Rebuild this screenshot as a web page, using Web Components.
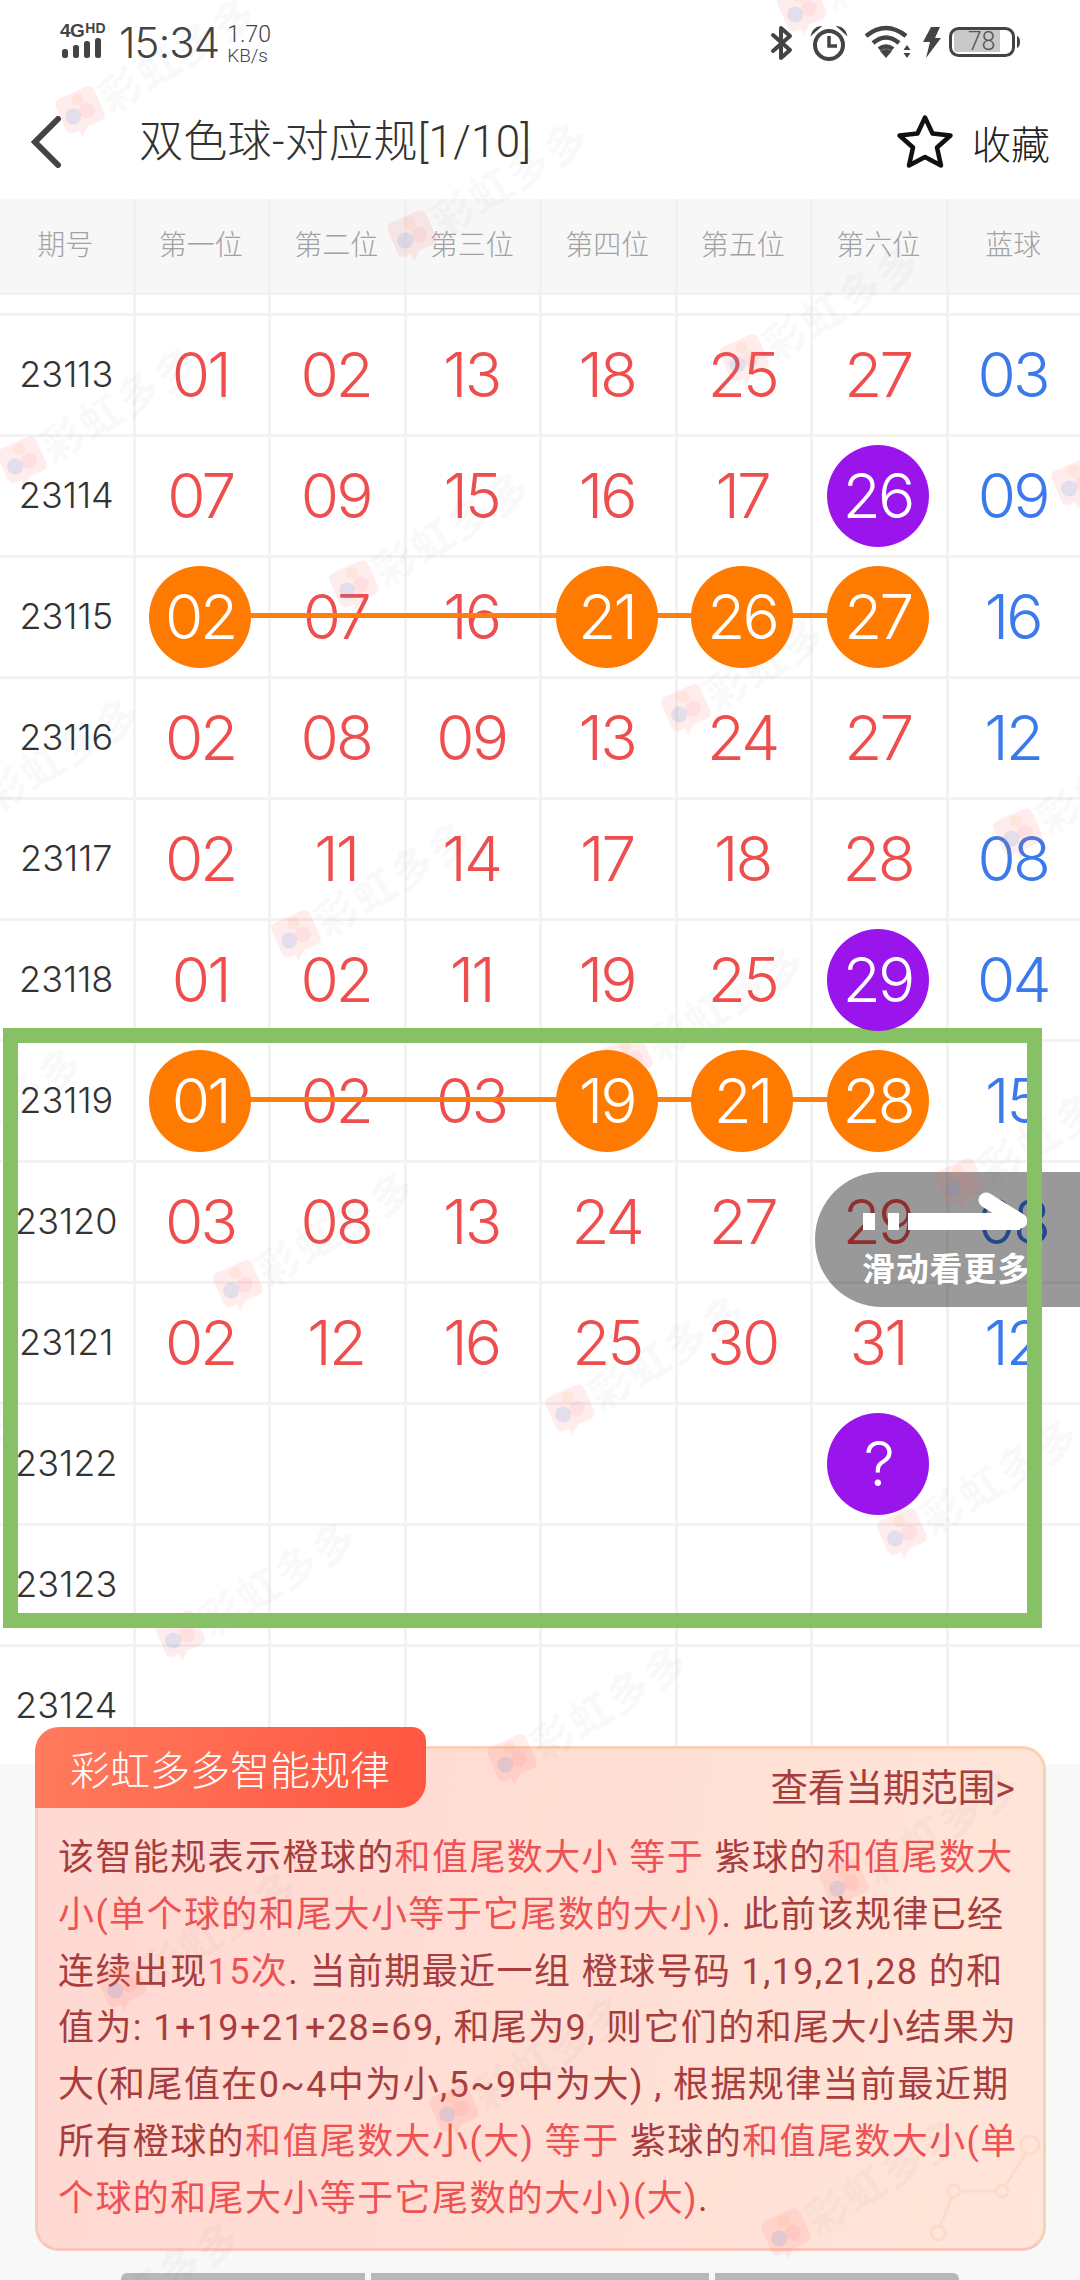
<!DOCTYPE html>
<html lang="zh">
<head>
<meta charset="utf-8">
<title>双色球-对应规</title>
<style>
    html, body { margin: 0; padding: 0; background: #fff; }
    body { font-family: "Noto Sans CJK SC", "Noto Sans", sans-serif; }
</style>
</head>
<body>

<lottery-screen>
    <status-bar slot="top"></status-bar>
    <title-bar slot="top" heading="双色球-对应规[1/10]"></title-bar>
    <draw-table slot="top">
        <draw-row issue="23113" nums="01,02,13,18,25,27,03"></draw-row>
        <draw-row issue="23114" nums="07,09,15,16,17,26,09" purple="5"></draw-row>
        <draw-row issue="23115" nums="02,07,16,21,26,27,16" orange="0,3,4,5"></draw-row>
        <draw-row issue="23116" nums="02,08,09,13,24,27,12"></draw-row>
        <draw-row issue="23117" nums="02,11,14,17,18,28,08"></draw-row>
        <draw-row issue="23118" nums="01,02,11,19,25,29,04" purple="5"></draw-row>
        <draw-row issue="23119" nums="01,02,03,19,21,28,15" orange="0,3,4,5"></draw-row>
        <draw-row issue="23120" nums="03,08,13,24,27,29,08"></draw-row>
        <draw-row issue="23121" nums="02,12,16,25,30,31,12"></draw-row>
        <draw-row issue="23122" nums=",,,,,?," purple="5"></draw-row>
        <draw-row issue="23123" nums=",,,,,,"></draw-row>
        <draw-row issue="23124" nums=",,,,,,"></draw-row>
    </draw-table>
    <rule-panel slot="bottom">
        <rule-card heading="彩虹多多智能规律" link="查看当期范围&gt;">该智能规表示橙球的<hi-text>和值尾数大小 等于 </hi-text>紫球的<hi-text>和值尾数大</hi-text><br><hi-text>小(单个球的和尾大小等于它尾数的大小)</hi-text>. 此前该规律已经<br>连续出现<hi-text>15次</hi-text>. 当前期最近一组 橙球号码 1,19,21,28 的和<br>值为: 1+19+21+28=69, 和尾为9, 则它们的和尾大小结果为<br>大(和尾值在0~4中为小,5~9中为大) , 根据规律当前最近期<br>所有橙球的<hi-text>和值尾数大小(大) 等于 </hi-text>紫球的<hi-text>和值尾数大小(单</hi-text><br><hi-text>个球的和尾大小等于它尾数的大小)(大)</hi-text>.</rule-card>
        <tab-strip></tab-strip>
    </rule-panel>
    <swipe-hint slot="over"></swipe-hint>
    <watermark-layer slot="over"></watermark-layer>
    <mark-box slot="over"></mark-box>
</lottery-screen>

<script>
const NUM_FONT = `Inter, Roboto, "Liberation Sans", sans-serif`;
const CJK_FONT = `Roboto, "Noto Sans CJK SC", sans-serif`;
const COLUMNS = `repeat(7, 135.5px) 131.5px`;

class lotteryScreen extends HTMLElement {
    constructor() {
        super();
        this.attachShadow({ mode: "open" }).innerHTML = `
            <style>
                :host { display: flex; flex-direction: column; position: relative; width: 1080px; height: 2280px; overflow: hidden; background: #fff; }
                .bottom { display: flex; flex: 1; min-height: 0; }
            </style>
            <slot name="top"></slot>
            <div class="bottom"><slot name="bottom"></slot></div>
            <slot name="over"></slot>
        `;
    }
}

class statusBar extends HTMLElement {
    constructor() {
        super();
        this.attachShadow({ mode: "open" }).innerHTML = `
            <style>
                :host { display: flex; align-items: flex-start; height: 85px; padding: 23px 59px 0 60px; box-sizing: border-box; color: #444; font-family: ${NUM_FONT}; }
                .net { display: flex; flex-direction: column; width: 46px; margin-right: 13px; }
                .net .tag { display: flex; align-items: flex-start; height: 14px; font-family: "Liberation Sans", sans-serif; font-weight: 700; line-height: 14px; white-space: nowrap; }
                .tag b { font-size: 19px; letter-spacing: -0.5px; line-height: 16px; }
                .tag i { font-style: normal; font-size: 14px; margin-left: 1px; line-height: 11px; }
                .net svg { display: block; margin-top: 1px; }
                .time { font-size: 42px; font-weight: 300; line-height: 40px; letter-spacing: -1px; margin-right: 8px; }
                .speed { display: flex; flex-direction: column; font-family: Roboto, sans-serif; font-weight: 300; }
                .speed span:first-child { font-size: 23px; line-height: 23px; }
                .speed span:last-child { font-size: 19px; line-height: 19px; }
                .icons { display: flex; align-items: flex-start; margin-left: auto; }
                .icons svg { display: block; }
                .batt { position: relative; width: 72px; height: 32px; margin: 4px 0 0 7px; }
                .batt span { position: absolute; left: 5px; top: 3px; width: 46px; height: 22px; background: #c9c9c9; border-radius: 3px 0 0 3px; font: 300 25px/24px Roboto, sans-serif; text-align: center; padding-left: 9px; box-sizing: border-box; color: #555; }
                .batt svg { position: absolute; left: 0; top: 0; }
            </style>
            <div class="net">
                <div class="tag"><b>4G</b><i>HD</i></div>
                <svg width="44" height="22" viewBox="0 0 44 22" fill="#444">
                    <rect x="2" y="11" width="6" height="9" rx="2.5"/>
                    <rect x="13" y="7" width="6" height="13" rx="2.5"/>
                    <rect x="24" y="3" width="6" height="17" rx="2.5"/>
                    <rect x="35" y="0" width="6" height="20" rx="2.5"/>
                </svg>
            </div>
            <div class="time">15:34</div>
            <div class="speed"><span>1.70</span><span>KB/s</span></div>
            <div class="icons">
                <svg width="24" height="36" viewBox="0 0 24 36" fill="none" stroke="#444" stroke-width="4" stroke-linejoin="round" stroke-linecap="round" style="margin-top:2px"><path d="M3 10 L20 25 L11 33 V3 L20 11 L3 26"/></svg>
                <svg width="38" height="36" viewBox="0 0 38 36" fill="none" stroke="#444" stroke-width="4" style="margin:2px 0 0 16px"><circle cx="19" cy="20" r="14"/><path d="M19 11 V21 H27" stroke-width="3.5"/><path d="M2 9 Q4 3 10 2 Z M36 9 Q34 3 28 2 Z" fill="#444" stroke-width="1.5"/></svg>
                <svg width="48" height="36" viewBox="0 0 48 36" fill="none" stroke="#444" stroke-width="4.5" style="margin:2px 0 0 17px"><path d="M1 11 Q21 -5 41 11"/><path d="M8 18 Q21 7 34 18"/><path d="M14 24 Q21 19 28 24" /><path d="M15 26 L21 33 L27 26 Q21 22 15 26 Z" fill="#444" stroke="none"/><path d="M42 20 L45.5 25 H38.500 Z M42 33 L45.500 28 H38.500 Z" fill="#444" stroke="none"/></svg>
                <svg width="20" height="32" viewBox="0 0 20 32" fill="#444" style="margin:4px 0 0 9px"><path d="M9 0 H18 L13 11 H19 L4 31 L8 15 H1 Z"/></svg>
                <div class="batt">
                    <span>78</span>
                    <svg width="72" height="32" viewBox="0 0 72 32" fill="none"><rect x="1.500" y="1.500" width="63" height="27" rx="8" stroke="#444" stroke-width="3"/><path d="M68 9 Q71 10 71 15 Q71 20 68 21 Z" fill="#444"/></svg>
                </div>
            </div>
        `;
    }
}

class titleBar extends HTMLElement {
    constructor() {
        super();
        this.shadow = this.attachShadow({ mode: "open" });
    }

    get heading() {
        return this.getAttribute("heading");
    }

    connectedCallback() {
        this.shadow.innerHTML = `
            <style>
                :host { display: flex; align-items: center; height: 114px; padding: 0 30px 0 30px; box-sizing: border-box; font-family: ${CJK_FONT}; font-weight: 300; color: #333; }
                .back { display: block; margin-right: 77px; }
                h1 { margin: 0; font-size: 44px; font-weight: 300; line-height: 56px; letter-spacing: .3px; }
                .fav { display: flex; align-items: center; margin-left: auto; font-size: 39px; gap: 18px; color: #222; }
                .fav svg { display: block; }
            </style>
            <svg class="back" width="32" height="52" viewBox="0 0 32 52" fill="none" stroke="#444" stroke-width="6" stroke-linecap="round"><path d="M28 3 L5 26 L28 49"/></svg>
            <h1>${this.heading}</h1>
            <div class="fav">
                <svg width="58" height="56" viewBox="0 0 58 56" fill="none" stroke="#111" stroke-width="4.500" stroke-linejoin="round"><path d="M29 3.500 L36.500 19.500 L54.500 21.500 L41 33.500 L45 51.500 L29 43 L13 51.500 L17 33.500 L3.500 21.500 L21.500 19.500 Z"/></svg>
                <span>收藏</span>
            </div>
        `;
    }
}

class drawTable extends HTMLElement {
    constructor() {
        super();
        const heads = ["期号", "第一位", "第二位", "第三位", "第四位", "第五位", "第六位", "蓝球"];
        this.attachShadow({ mode: "open" }).innerHTML = `
            <style>
                :host { display: block; height: 1565px; overflow: hidden; font-family: ${CJK_FONT}; }
                .head, .gap { display: grid; grid-template-columns: ${COLUMNS}; }
                .head div { display: flex; align-items: center; justify-content: center; box-sizing: border-box; height: 96px; padding: 0 2px 6px 0; background: #f7f7f7; border-right: 3px solid #f1f1f1; border-bottom: 3px solid #f1f1f1; font-size: 28px; font-weight: 300; color: #a2a2a2; }
                .gap div { box-sizing: border-box; height: 21px; border-right: 3px solid #f2f2f2; border-bottom: 3px solid #f2f2f2; }
                .head div:last-child, .gap div:last-child { border-right: 0; }
            </style>
            <div class="head">${heads.map(h => `<div>${h}</div>`).join("")}</div>
            <div class="gap">${heads.map(() => "<div></div>").join("")}</div>
            <slot></slot>
        `;
    }
}

class drawRow extends HTMLElement {
    constructor() {
        super();
        this.shadow = this.attachShadow({ mode: "open" });
    }

    indexes(name) {
        const v = this.getAttribute(name);
        return v ? v.split(",").map(Number) : [];
    }

    connectedCallback() {
        const orange = this.indexes("orange");
        const purple = this.indexes("purple");
        const nums = this.getAttribute("nums").split(",");
        const cells = nums.map((n, i) => {
            let cls = i === 6 ? "num blue" : "num";
            if (orange.includes(i)) cls = "num ball orange";
            if (purple.includes(i)) cls = "num ball purple";
            const last = i === 6 ? " last" : "";
            return `<div class="cell${last}"><span class="${cls}">${n}</span></div>`;
        }).join("");
        this.shadow.innerHTML = `
            <style>
                :host { display: grid; grid-template-columns: ${COLUMNS}; position: relative; height: 121px; font-family: ${NUM_FONT}; }
                .cell { display: flex; align-items: center; justify-content: center; box-sizing: border-box; height: 121px; padding-right: 3px; border-right: 3px solid #f2f2f2; border-bottom: 3px solid #f2f2f2; }
                .last { border-right: 0; }
                .issue { font-size: 36px; font-weight: 300; letter-spacing: 0; color: #333; padding: 0 0 2px 0; }
                .num { font-size: 62px; font-weight: 300; letter-spacing: -2.8px; color: #ee4e4e; line-height: 1; }
                .blue { color: #3b7aea; }
                .ball { position: relative; z-index: 2; display: flex; align-items: center; justify-content: center; width: 102px; height: 102px; border-radius: 50%; color: #fff; }
                .orange { background: #ff7a00; }
                .purple { background: #9a14ec; }
                .link { position: absolute; z-index: 1; left: 202px; width: 675px; top: 55px; height: 5px; background: #ff7f0e; }
            </style>
            <div class="cell issue">${this.getAttribute("issue")}</div>
            ${cells}
            ${orange.length ? '<div class="link"></div>' : ""}
        `;
    }
}

class rulePanel extends HTMLElement {
    constructor() {
        super();
        this.attachShadow({ mode: "open" }).innerHTML = `
            <style>
                :host { display: flex; flex-direction: column; box-sizing: border-box; width: 1080px; flex: none; background: #f8f8f8; position: relative; padding: 0 34px 0 35px; }
            </style>
            <slot></slot>
        `;
    }
}

class ruleCard extends HTMLElement {
    constructor() {
        super();
        this.shadow = this.attachShadow({ mode: "open" });
    }

    connectedCallback() {
        this.shadow.innerHTML = `
            <style>
                :host { display: block; position: relative; box-sizing: border-box; height: 505px; margin-top: -18px; padding: 16px 28px 0 20px; border: 3px solid #fbd0b4; border-left-color: #fbc8bc; border-bottom-color: #fbc4b8; border-radius: 24px; background: linear-gradient(100deg, #ffd9d3 0%, #ffdfd5 55%, #ffe6da 100%); font-family: ${CJK_FONT}; color: #a83d3d; }
                .tab { position: absolute; left: -3px; top: -22px; display: flex; align-items: center; box-sizing: border-box; width: 391px; height: 81px; padding-left: 35px; border-radius: 24px 14px 26px 0; background: linear-gradient(100deg, #ff7b5e, #ff5640); color: #fff; font-size: 40px; font-weight: 300; }
                .link { text-align: right; font-size: 37.500px; line-height: 46px; }
                .text { margin-top: 19px; font-size: 36px; line-height: 56.800px; letter-spacing: 1.4px; white-space: nowrap; }
                svg { position: absolute; right: -7px; bottom: 3px; }
            </style>
            <div class="tab">${this.getAttribute("heading")}</div>
            <div class="link">${this.getAttribute("link")}</div>
            <div class="text"><slot></slot></div>
            <svg width="120" height="112" viewBox="0 0 120 112" fill="none" stroke="#fbcdb8" stroke-width="3" opacity=".45">
                <circle cx="100" cy="12" r="9"/><circle cx="72" cy="58" r="6"/><circle cx="24" cy="58" r="6"/><circle cx="8" cy="100" r="7"/>
                <path d="M96 20 L75 53 M66 58 H30 M22 64 L10 93"/>
            </svg>
        `;
    }
}

class hiText extends HTMLElement {
    constructor() {
        super();
        this.attachShadow({ mode: "open" }).innerHTML = `<style>:host { display: inline; color: #ee5252; }</style><slot></slot>`;
    }
}

class tabStrip extends HTMLElement {
    constructor() {
        super();
        this.attachShadow({ mode: "open" }).innerHTML = `
            <style>
                :host { display: flex; gap: 6px; margin: 22px 0 0 86px; height: 7px; }
                div { height: 7px; background: #b8b8b8; }
                div:nth-of-type(1) { width: 244px; border-radius: 6px 0 0 0; }
                div:nth-of-type(2) { width: 338px; }
                div:nth-of-type(3) { width: 244px; border-radius: 0 6px 0 0; }
            </style>
            <div></div><div></div><div></div>
        `;
    }
}

class swipeHint extends HTMLElement {
    constructor() {
        super();
        this.attachShadow({ mode: "open" }).innerHTML = `
            <style>
                :host { position: absolute; left: 815px; top: 1172px; display: flex; flex-direction: column; box-sizing: border-box; width: 265px; height: 135px; padding: 18px 0 0 47px; border-radius: 67px 0 0 67px; background: rgba(0,0,0,.4); font-family: "Noto Sans CJK SC", sans-serif; color: #fff; }
                svg { display: block; }
                span { font-size: 33px; font-weight: 700; line-height: 44px; margin-top: 3px; white-space: nowrap; letter-spacing: .8px; }
            </style>
            <svg width="170" height="52" viewBox="0 0 170 52" fill="#fff">
                <rect x="1" y="23" width="12" height="17"/>
                <rect x="26" y="23" width="11" height="17"/>
                <rect x="46" y="23" width="112" height="17"/>
                <path d="M124 10 L158 31" stroke="#fff" stroke-width="15" stroke-linecap="round"/>
            </svg>
            <span>滑动看更多</span>
        `;
    }
}

class watermarkLayer extends HTMLElement {
    constructor() {
        super();
        let marks = "";
        for (let j = -1; j <= 6; j++) {
            for (let i = -1; i <= 6; i++) {
                const x = 81 + i * 332 - j * 58;
                const y = 112 + i * 124 + j * 350;
                if (x < -220 || x > 1100 || y < -40 || y > 2400) continue;
                marks += `
                    <div class="mark" style="left:${x}px;top:${y}px">
                        <svg width="48" height="48" viewBox="0 0 48 48">
                            <path d="M10 3 H38 Q45 3 45 10 V33 Q45 40 38 40 H24 L15 47 V40 H10 Q3 40 3 33 V10 Q3 3 10 3 Z" fill="#ff5a5a" opacity=".11"/>
                            <circle cx="15" cy="25" r="8" fill="#4b8fe8" opacity=".16"/>
                            <circle cx="30" cy="25" r="8" fill="#ff6a6a" opacity=".1"/>
                            <circle cx="26" cy="11" r="6" fill="#ffa15a" opacity=".12"/>
                        </svg>
                        <span>彩虹多多</span>
                    </div>`;
            }
        }
        this.attachShadow({ mode: "open" }).innerHTML = `
            <style>
                :host { position: absolute; left: 0; top: 0; width: 1080px; height: 2280px; overflow: hidden; pointer-events: none; }
                .mark { position: absolute; display: flex; align-items: center; height: 48px; margin: -24px 0 0 -24px; transform: rotate(-32deg); transform-origin: 24px 24px; }
                svg { display: block; flex: none; transform: rotate(8deg); }
                span { font-family: "Noto Sans CJK SC", sans-serif; font-size: 42px; font-weight: 700; letter-spacing: 2.500px; line-height: 48px; color: rgba(70,70,70,.055); white-space: nowrap; }
            </style>
            ${marks}
        `;
    }
}

class markBox extends HTMLElement {
    constructor() {
        super();
        this.attachShadow({ mode: "open" }).innerHTML = `
            <style>
                :host { position: absolute; left: 3px; top: 1028px; box-sizing: border-box; width: 1039px; height: 600px; border: 15px solid #86c166; pointer-events: none; }
            </style>
        `;
    }
}

window.customElements.define("lottery-screen", lotteryScreen);
window.customElements.define("status-bar", statusBar);
window.customElements.define("title-bar", titleBar);
window.customElements.define("draw-table", drawTable);
window.customElements.define("draw-row", drawRow);
window.customElements.define("rule-panel", rulePanel);
window.customElements.define("rule-card", ruleCard);
window.customElements.define("hi-text", hiText);
window.customElements.define("tab-strip", tabStrip);
window.customElements.define("swipe-hint", swipeHint);
window.customElements.define("watermark-layer", watermarkLayer);
window.customElements.define("mark-box", markBox);
</script>
</body>
</html>
